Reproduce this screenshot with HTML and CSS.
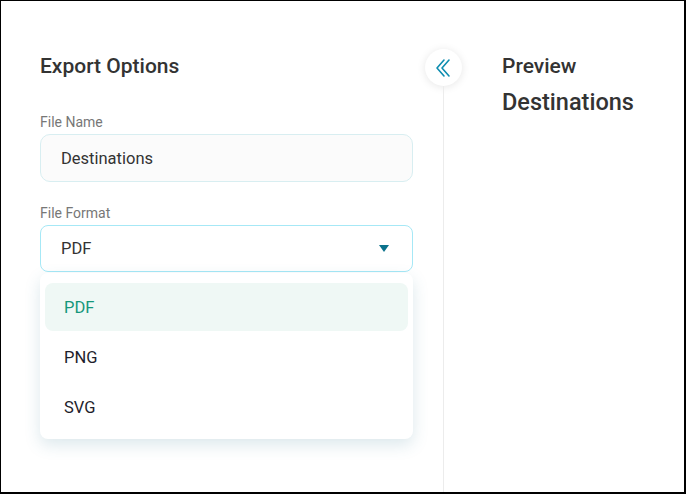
FILE: index.html
```html
<!DOCTYPE html>
<html lang="en">
<head>
  <meta charset="UTF-8">
  <meta name="viewport" content="width=device-width, initial-scale=1.0">
  <title>Export Options</title>
  <link rel="stylesheet" href="styles.css">
</head>
<body>
  <div class="frame">
    <div class="options">
      <h2 class="panel-title">Export Options</h2>

      <label class="field-label" for="fileName">File Name</label>
      <input id="fileName" class="text-input" type="text" value="Destinations">

      <label class="field-label">File Format</label>
      <div class="select-wrap">
        <div class="select">
          <span>PDF</span>
          <span class="caret"></span>
        </div>
        <ul class="menu">
          <li class="menu-item selected">PDF</li>
          <li class="menu-item">PNG</li>
          <li class="menu-item">SVG</li>
        </ul>
      </div>
    </div>

    <div class="divider">
      <button class="collapse-btn" aria-label="Collapse">
        <svg width="20" height="20" viewBox="0 0 20 20" fill="none" stroke="#0e8db0" stroke-width="1.6" stroke-linecap="round" stroke-linejoin="round">
          <path d="M11 2 L4 10 L11 18"/>
          <path d="M16 2 L9 10 L16 18"/>
        </svg>
      </button>
      <div class="divider-line"></div>
    </div>

    <div class="preview">
      <h2 class="panel-title">Preview</h2>
      <div class="preview-name">Destinations</div>
    </div>
  </div>
</body>
</html>
```

FILE: styles.css
```css
* {
  box-sizing: border-box;
}
body {
  margin: 0;
  font-family: Roboto, 'Liberation Sans', Arial, sans-serif;
  background: #fff;
  color: #333;
}
.frame {
  width: 686px;
  height: 494px;
  border: 1px solid #000;
  border-right-width: 2px;
  border-bottom-width: 2px;
  display: flex;
  overflow: hidden;
}
.options {
  width: 424px;
  padding: 53px 12px 0 39px;
}
.panel-title {
  margin: 0;
  font-size: 21px;
  line-height: 25px;
  font-weight: 500;
  color: #333;
}
.options .panel-title {
  margin-bottom: 35px;
}
.field-label {
  display: block;
  font-size: 14px;
  line-height: 17px;
  color: #777;
  margin-bottom: 3px;
}
.text-input {
  display: block;
  width: 373px;
  height: 48px;
  padding: 0 20px;
  margin-bottom: 23px;
  border: 1px solid #d8eef1;
  border-radius: 10px;
  background: #fbfbfb;
  font-family: inherit;
  font-size: 16.5px;
  color: #333;
  outline: none;
}
.select-wrap {
  position: relative;
  width: 373px;
}
.select {
  height: 47px;
  margin-top: 1px;
  display: flex;
  align-items: center;
  justify-content: space-between;
  padding: 0 23px 0 20px;
  border: 1px solid #a6e8f6;
  border-radius: 8px;
  font-size: 16.5px;
  color: #333;
}
.caret {
  width: 0;
  height: 0;
  border-left: 5px solid transparent;
  border-right: 5px solid transparent;
  border-top: 7px solid #0b728c;
}
.menu {
  position: absolute;
  top: 48px;
  left: 0;
  right: 0;
  margin: 0;
  padding: 10px 5px 8px;
  list-style: none;
  background: #fff;
  border-radius: 8px;
  box-shadow: 0 6px 16px rgba(60, 130, 150, 0.18);
}
.menu-item {
  height: 48px;
  margin-bottom: 2px;
  padding-left: 19px;
  display: flex;
  align-items: center;
  font-size: 16.5px;
  color: #1e1e2c;
  border-radius: 8px;
}
.menu-item:last-child {
  margin-bottom: 0;
}
.menu-item.selected {
  background: #eff8f5;
  color: #15977b;
}
.divider {
  width: 36px;
  display: flex;
  flex-direction: column;
  align-items: center;
  padding-top: 48px;
}
.collapse-btn {
  width: 37px;
  height: 37px;
  flex-shrink: 0;
  border: none;
  border-radius: 50%;
  background: #fff;
  box-shadow: 0 1px 8px rgba(0, 0, 0, 0.1);
  display: flex;
  align-items: center;
  justify-content: center;
  padding: 0;
  cursor: pointer;
}
.divider-line {
  flex: 1;
  width: 1px;
  background: #ececec;
}
.preview {
  padding: 53px 0 0 41px;
}
.preview-name {
  margin-top: 9px;
  font-size: 23.5px;
  line-height: 28px;
  font-weight: 500;
  color: #333;
}
```
